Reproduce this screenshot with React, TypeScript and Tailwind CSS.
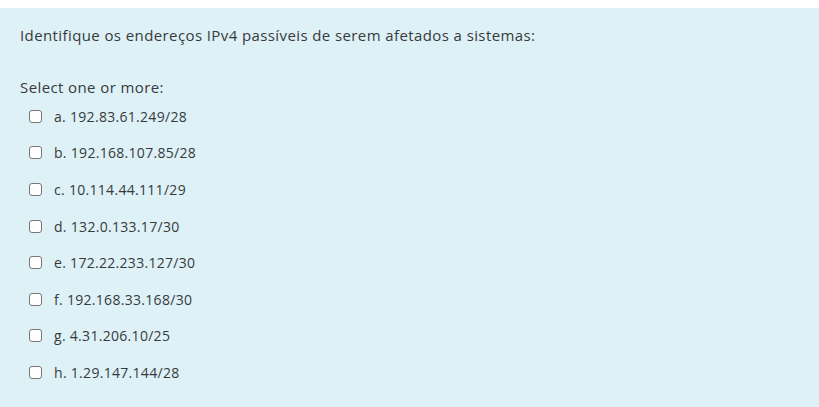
import React from 'react'

const opcoes = [
  'a. 192.83.61.249/28',
  'b. 192.168.107.85/28',
  'c. 10.114.44.111/29',
  'd. 132.0.133.17/30',
  'e. 172.22.233.127/30',
  'f. 192.168.33.168/30',
  'g. 4.31.206.10/25',
  'h. 1.29.147.144/28',
]

export default function App() {
  return (
    <main className="min-h-screen bg-white pt-2 font-['Open_Sans',sans-serif] text-[#373a3c]">
      <div className="min-h-[399px] bg-[#def1f7] pl-5 pr-5 pt-[14px]">
        <p className="text-[15px] leading-[26px] tracking-[0.4px]">
          Identifique os endereços IPv4 passíveis de serem afetados a sistemas:
        </p>
        <p className="mt-[26px] text-[15px] leading-[26px] tracking-[0.4px]">Select one or more:</p>
        <div className="mt-[-2px] flex flex-col">
          {opcoes.map((o) => (
            <label key={o} className="flex h-[36.6px] items-center pl-[9px]">
              <span className="h-[13px] w-[13px] shrink-0 rounded-[3px] border border-[#767676] bg-white" />
              <span className="ml-[12px] text-[14px] tracking-[0.3px]">{o}</span>
            </label>
          ))}
        </div>
      </div>
    </main>
  )
}
